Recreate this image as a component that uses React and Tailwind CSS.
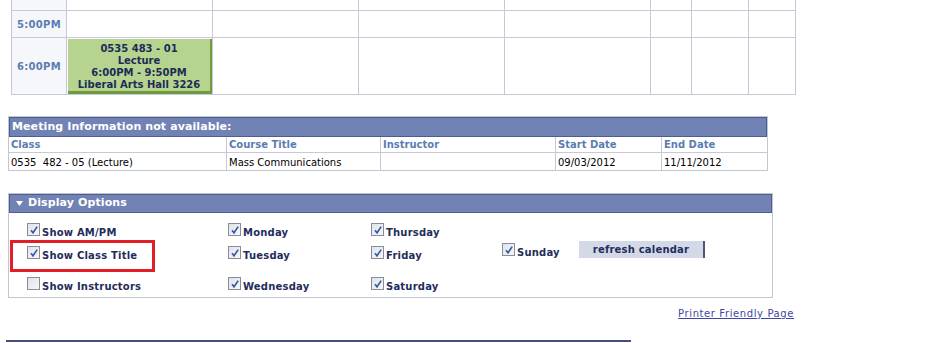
import React from "react";

const F = { fontFamily: '"DejaVu Sans", Verdana, sans-serif' };

function Check({ checked = true }) {
  return (
    <span className="inline-flex h-[13px] w-[13px] shrink-0 items-center justify-center border border-[#8a8d94] bg-gradient-to-br from-[#dfe3ea] to-[#f6f7f9]">
      {checked && (
        <svg width="10" height="10" viewBox="0 0 10 10">
          <path d="M2 5.2 L4 7.8 L8.2 1.6" fill="none" stroke="#3a56a8" strokeWidth="1.6" />
        </svg>
      )}
    </span>
  );
}

function Opt({ label, checked = true, className = "" }) {
  return (
    <div className={"flex items-start gap-[2px] " + className}>
      <Check checked={checked} />
      <span className="mt-[4px] text-[10px] font-bold leading-[12px] tracking-[0.2px] text-[#1f2d5c]">{label}</span>
    </div>
  );
}

const cols = [55, 146, 146, 146, 146, 41, 57, 47];

function Row({ h, time, children }) {
  return (
    <div className="flex" style={{ height: h }}>
      {cols.map((w, i) => (
        <div
          key={i}
          className={
            "shrink-0 border-b border-r border-[#c5c9d8] " +
            (i === 0 ? "flex items-center justify-center bg-[#f6f7fb] text-[10px] font-bold tracking-[0.3px] text-[#5a7db0]" : "bg-white")
          }
          style={{ width: w }}
        >
          {i === 0 ? time : i === 1 ? children : null}
        </div>
      ))}
    </div>
  );
}

export default function App() {
  return (
    <div className="relative h-[343px] w-[951px] overflow-hidden bg-white" style={F}>
      {/* schedule grid */}
      <div className="ml-[11px] -mt-[17px] w-fit border-l border-[#c5c9d8]">
        <Row h={28} time="4:00PM" />
        <Row h={27} time="5:00PM" />
        <Row h={57} time="6:00PM">
          <div className="h-full w-full pl-px pt-px">
            <div className="flex h-full w-full flex-col items-center justify-center border-b-[3px] border-r-[2px] border-[#6f9a3e] bg-[#b6d48f] pt-[3px] text-center text-[10px] font-bold leading-[12px] text-[#1d2b58]">
              <div>0535 483 - 01</div>
              <div>Lecture</div>
              <div>6:00PM - 9:50PM</div>
              <div>Liberal Arts Hall 3226</div>
            </div>
          </div>
        </Row>
      </div>

      {/* Meeting info */}
      <div className="ml-[8px] mt-[21px] w-[760px] border border-[#c3c6d0]">
        <div className="flex h-[20px] items-center border border-[#4d5d8f] bg-[#7183b5] pl-[2px] text-[11px] font-bold tracking-[0.1px] text-white">
          Meeting Information not available:
        </div>
        <div className="flex h-[16px] items-center border-b border-[#c5c9d8] text-[10px] font-bold text-[#5a7db0]">
          <div className="w-[218px] border-r border-[#c5c9d8] pl-[2px] leading-[16px]">Class</div>
          <div className="w-[154px] border-r border-[#c5c9d8] pl-[2px] leading-[16px]">Course Title</div>
          <div className="w-[175px] border-r border-[#c5c9d8] pl-[2px] leading-[16px]">Instructor</div>
          <div className="w-[106px] border-r border-[#c5c9d8] pl-[2px] leading-[16px]">Start Date</div>
          <div className="pl-[2px] leading-[16px]">End Date</div>
        </div>
        <div className="flex h-[17px] items-center text-[10px] text-black">
          <div className="h-full w-[218px] border-r border-[#c5c9d8] pl-[2px] pt-[1px] leading-[17px] whitespace-pre">0535  482 - 05 (Lecture)</div>
          <div className="h-full w-[154px] border-r border-[#c5c9d8] pl-[2px] pt-[1px] leading-[17px]">Mass Communications</div>
          <div className="h-full w-[175px] border-r border-[#c5c9d8] pl-[2px] pt-[1px] leading-[17px]"></div>
          <div className="h-full w-[106px] border-r border-[#c5c9d8] pl-[2px] pt-[1px] leading-[17px]">09/03/2012</div>
          <div className="h-full pl-[2px] pt-[1px] leading-[17px]">11/11/2012</div>
        </div>
      </div>

      {/* Display options */}
      <div className="relative ml-[8px] mt-[22px] h-[105px] w-[765px] border border-[#c3c6d0]">
        <div className="flex h-[19px] items-center gap-[5px] border border-[#4d5d8f] bg-[#7183b5] pl-[6px] text-[11px] font-bold tracking-[0.1px] text-white">
          <svg width="7" height="5" viewBox="0 0 7 5">
            <path d="M0 0 H7 L3.5 5 Z" fill="#fff" />
          </svg>
          Display Options
        </div>
        <div className="flex pt-[10px]">
          <div className="ml-[18px] flex w-[201px] flex-col">
            <Opt label="Show AM/PM" />
            <Opt label="Show Class Title" className="mt-[7px]" />
            <Opt label="Show Instructors" checked={false} className="mt-[15px]" />
          </div>
          <div className="flex w-[143px] flex-col">
            <Opt label="Monday" />
            <Opt label="Tuesday" className="mt-[7px]" />
            <Opt label="Wednesday" className="mt-[15px]" />
          </div>
          <div className="flex w-[131px] flex-col">
            <Opt label="Thursday" />
            <Opt label="Friday" className="mt-[7px]" />
            <Opt label="Saturday" className="mt-[15px]" />
          </div>
          <div className="mt-[20px] flex items-start">
            <Opt label="Sunday" className="w-[77px]" />
            <button className="-mt-[2px] h-[17px] w-[126px] border-r-2 border-[#4d5575] bg-[#d3d9e6] text-[10px] font-bold tracking-[0.2px] text-[#1f2d5c]" style={F}>
              refresh calendar
            </button>
          </div>
        </div>
        <div className="absolute left-[1px] top-[46px] h-[32px] w-[145px] border-[3px] border-[#e11d25]" />
      </div>

      <div className="mt-[8px] flex w-[794px] justify-end">
        <a className="text-[10px] tracking-[0.6px] text-[#3f45a5] underline" href="#">Printer Friendly Page</a>
      </div>

      <div className="absolute left-[6px] top-[340px] h-[2px] w-[625px] bg-[#44517f]" />
    </div>
  );
}
